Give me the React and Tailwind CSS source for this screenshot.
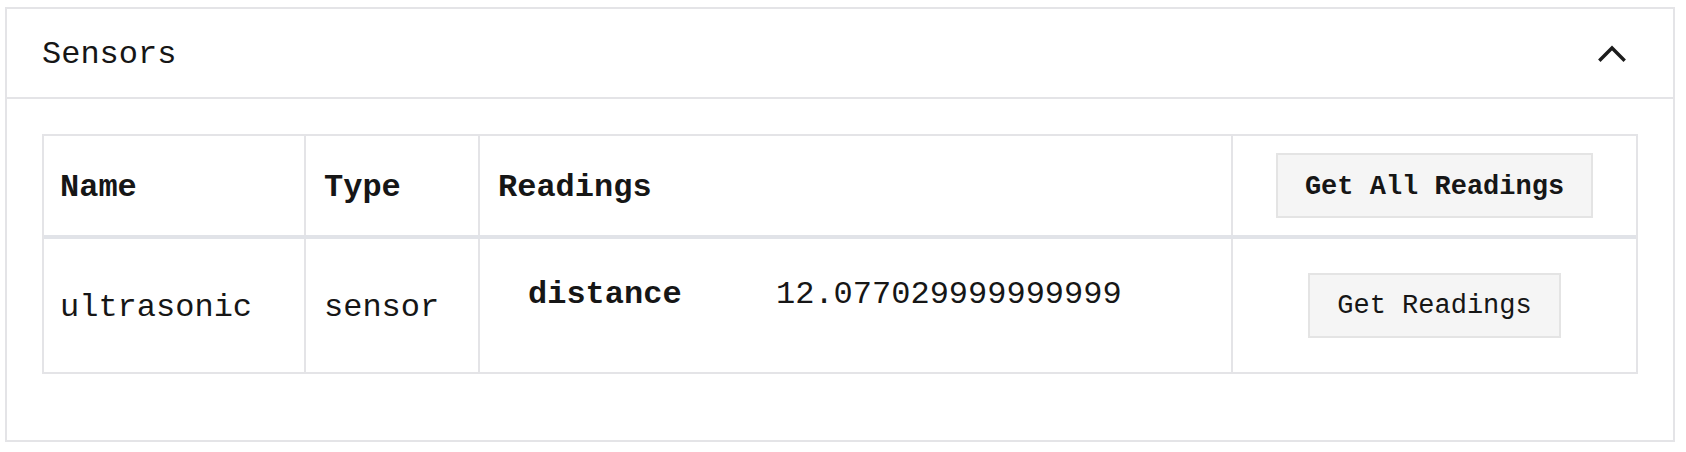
import { useState } from "react"

const sensors = [
  {
    name: "ultrasonic",
    type: "sensor",
    readings: [{ key: "distance", value: "12.077029999999999" }],
  },
]

function Chevron({ open }) {
  return (
    <svg width="28" height="18" viewBox="0 0 28 18" className={open ? "" : "rotate-180"}>
      <polyline points="2.5,15.5 14,4 25.5,15.5" fill="none" stroke="#1c1c1c" strokeWidth="3.4" strokeLinecap="square" />
    </svg>
  )
}

export default function App() {
  const [open, setOpen] = useState(true)

  return (
    <div className="min-h-screen bg-white pt-[7px] pl-[5px] text-[#161616]" style={{ fontFamily: '"Liberation Mono", "DejaVu Sans Mono", monospace' }}>
      <div className="w-[1670px] border-2 border-[#e4e4e7]">
        <button
          onClick={() => setOpen(!open)}
          className="flex h-[88px] w-full items-center justify-between pl-[35px] pr-[47px] text-left"
        >
          <span className="pt-[4px] text-[32px] leading-none">Sensors</span>
          <Chevron open={open} />
        </button>

        {open && (
          <div className="border-t-2 border-[#e4e4e7] px-[35px] pt-[35px] pb-[66px]">
            <div className="border-2 border-[#e4e4e7]">
              <div className="grid grid-cols-[262px_174px_753px_1fr] border-b-4 border-[#e1e3e8]">
                <div className="flex h-[99px] items-center border-r-2 border-[#e4e4e7] pt-[4px] pl-[16px] text-[32px] font-bold">Name</div>
                <div className="flex h-[99px] items-center border-r-2 border-[#e4e4e7] pt-[4px] pl-[18px] text-[32px] font-bold">Type</div>
                <div className="flex h-[99px] items-center border-r-2 border-[#e4e4e7] pt-[4px] pl-[18px] text-[32px] font-bold">Readings</div>
                <div className="flex h-[99px] items-center justify-center">
                  <button className="h-[65px] border-2 border-[#e4e4e4] bg-[#f5f5f5] px-[27px] pt-[3px] text-[27px] font-bold">
                    Get All Readings
                  </button>
                </div>
              </div>

              {sensors.map((sensor) => (
                <div key={sensor.name} className="grid grid-cols-[262px_174px_753px_1fr]">
                  <div className="flex h-[133px] items-center border-r-2 border-[#e4e4e7] pt-[4px] pl-[16px] text-[32px]">{sensor.name}</div>
                  <div className="flex h-[133px] items-center border-r-2 border-[#e4e4e7] pt-[4px] pl-[18px] text-[32px]">{sensor.type}</div>
                  <div className="flex h-[133px] flex-col justify-center border-r-2 border-[#e4e4e7] pt-[2px] pl-[18px]">
                    {sensor.readings.map((r) => (
                      <div key={r.key} className="mb-[24px] flex items-center text-[32px]">
                        <span className="w-[278px] pl-[30px] font-bold">{r.key}</span>
                        <span>{r.value}</span>
                      </div>
                    ))}
                  </div>
                  <div className="flex h-[133px] items-center justify-center">
                    <button className="mb-[1px] h-[65px] border-2 border-[#e4e4e4] bg-[#f5f5f5] px-[27px] pt-[3px] text-[27px]">
                      Get Readings
                    </button>
                  </div>
                </div>
              ))}
            </div>
          </div>
        )}
      </div>
    </div>
  )
}
